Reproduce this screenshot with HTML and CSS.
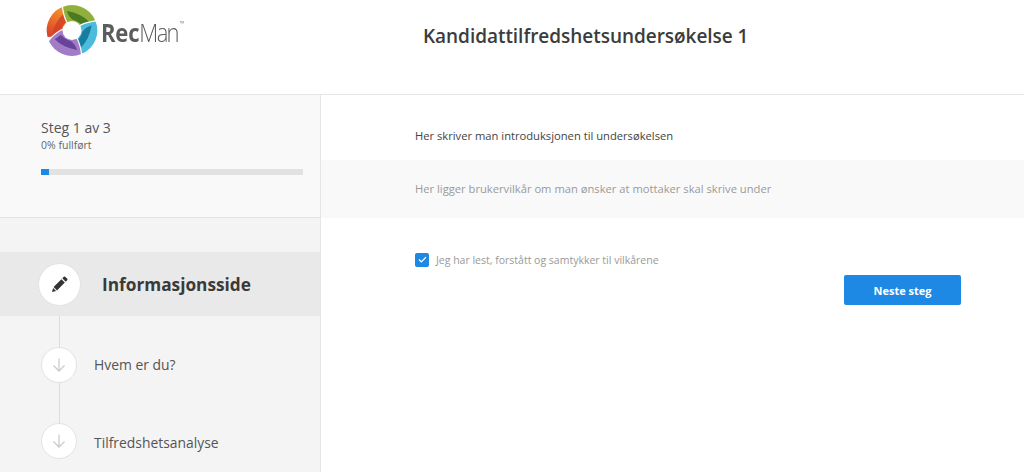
FILE: index.html
```html
<!DOCTYPE html>
<html lang="no">
<head>
<meta charset="utf-8">
<title>Kandidattilfredshetsundersøkelse 1</title>
<link rel="stylesheet" href="styles.css">
</head>
<body>
<header class="top">
  <div class="brand">
    <svg class="mark" viewBox="-26 -27.500 52 56" width="52" height="56" aria-hidden="true">
      <defs>
        <path id="blade" d="M-8-24.700A26 26 0 0 0-25 7Q-15 7-8 4Q-6-2 3-7Q0-17-8-24.700Z"/>
        <path id="streak" d="M-7-18Q-16-11-20 3Q-14 2-10.500-2Q-8-8-3-11.500Z"/>
        <linearGradient id="go" x1="0.8" y1="0" x2="0.2" y2="1"><stop offset="0" stop-color="#f2a22c"/><stop offset="0.6" stop-color="#ea6a28"/><stop offset="1" stop-color="#d8402e"/></linearGradient>
      </defs>
      <g>
        <use class="blade" href="#blade" fill="url(#go)"/>
        <use href="#streak" fill="#cf3f28" opacity="0.8"/>
      </g>
      <g transform="rotate(84)">
        <use class="blade" href="#blade" fill="#8fb03c"/>
        <use href="#streak" fill="#4a7a22"/>
      </g>
      <g transform="rotate(174)">
        <use class="blade" href="#blade" fill="#4dbbdc"/>
        <use href="#streak" fill="#177c9e"/>
      </g>
      <g transform="rotate(264)">
        <use class="blade" href="#blade" fill="#a27cc6"/>
        <use href="#streak" fill="#65449a"/>
      </g>
      <circle class="mark-hole" r="9.500"/>
    </svg>
    <span class="wordmark"><b>Rec</b>Man<sup>™</sup></span>
  </div>
  <h1 class="title">Kandidattilfredshetsundersøkelse 1</h1>
</header>
<div class="main">
  <aside class="side">
    <section class="progress">
      <div class="step-count">Steg 1 av 3</div>
      <div class="percent">0% fullført</div>
      <div class="bar"><div class="bar-fill"></div></div>
    </section>
    <nav class="steps">
      <div class="step step-active">
        <span class="dot dot-large">
          <svg viewBox="0 0 16 16" width="16" height="16" aria-hidden="true"><path d="M11.800.8a1 1 0 0 1 1.400 0l2 2a1 1 0 0 1 0 1.400L13.700 5.700 10.300 2.300zM9.400 3.200 12.800 6.600 5 14.400 1.600 11zM1.100 11.900 4.100 14.900 0 16z" fill="#333"/></svg>
        </span>
        <span class="step-name-active">Informasjonsside</span>
      </div>
      <div class="connector first"></div>
      <div class="step step-two">
        <span class="dot">
          <svg viewBox="0 0 14 16" width="14" height="16" aria-hidden="true"><path d="M7 1.500V14M1.500 8.500 7 14l5.500-5.500" fill="none" stroke="#ccc" stroke-width="1.300"/></svg>
        </span>
        <span class="step-name">Hvem er du?</span>
      </div>
      <div class="connector"></div>
      <div class="step step-three">
        <span class="dot">
          <svg viewBox="0 0 14 16" width="14" height="16" aria-hidden="true"><path d="M7 1.500V14M1.500 8.500 7 14l5.500-5.500" fill="none" stroke="#ccc" stroke-width="1.300"/></svg>
        </span>
        <span class="step-name">Tilfredshetsanalyse</span>
      </div>
    </nav>
  </aside>
  <main class="content">
    <p class="intro">Her skriver man introduksjonen til undersøkelsen</p>
    <div class="terms">Her ligger brukervilkår om man ønsker at mottaker skal skrive under</div>
    <label class="agree">
      <span class="check">
        <svg viewBox="0 0 10 8" width="9" height="7" aria-hidden="true"><path d="M1 4l2.700 2.700L9 1.300" fill="none" stroke="#fff" stroke-width="1.500"/></svg>
      </span>
      Jeg har lest, forstått og samtykker til vilkårene
    </label>
    <div class="actions"><button class="next" type="button">Neste steg</button></div>
  </main>
</div>
</body>
</html>
```
FILE: styles.css
```css
* { box-sizing: border-box; }
html, body { margin: 0; height: 100%; overflow: hidden; }
body { font-family: "Open Sans", sans-serif; color: #444; background: #fff; height: 472px; display: flex; flex-direction: column; }

.top { height: 95px; flex: none; display: flex; border-bottom: 1px solid #e6e6e6; background: #fff; }
.brand { width: 321px; flex: none; display: flex; align-items: flex-start; padding: 3px 0 0 46px; filter: blur(0.35px); }
.mark { flex: none; overflow: visible; }
.blade { stroke: #fff; stroke-width: 1.200px; }
.mark-hole { fill: #fff; }
.wordmark { font-family: "Open Sans", sans-serif; font-size: 25px; letter-spacing: -1.9px; color: #5a5c5e; margin: 13px 0 0 3px; line-height: 32px; font-weight: 300; transform: scaleX(0.88); transform-origin: left center; white-space: nowrap; }
.wordmark b { font-weight: 700; letter-spacing: -0.2px; }
.wordmark sup { font-size: 7px; letter-spacing: 0; vertical-align: 16px; line-height: 0; margin-left: 2px; }
.title { margin: 0; font-size: 19px; font-weight: 600; color: #3c3c3c; padding: 23px 0 0 102px; line-height: 27px; letter-spacing: -0.04px; }

.main { flex: 1; display: flex; min-height: 0; }
.side { width: 321px; flex: none; background: #f4f4f4; border-right: 1px solid #e6e6e6; overflow: hidden; }
.progress { height: 123px; background: #f9f9f9; border-bottom: 1px solid #e3e3e3; padding: 23px 17px 0 41px; }
.step-count { font-size: 14px; line-height: 19px; color: #555; }
.percent { font-size: 10.500px; line-height: 15px; margin-top: 1px; color: #666; }
.bar { height: 6px; margin-top: 16px; background: #e2e2e2; }
.bar-fill { width: 8px; height: 6px; background: #1e88e5; }

.steps { padding-top: 34px; }
.step { display: flex; align-items: center; padding-left: 41px; height: 36px; }
.step-active { background: #e9e9e9; height: 64px; padding-left: 38px; }
.step-two .step-name { margin-bottom: 2px; }
.step-three .step-name { margin-top: 2px; }
.dot { width: 36px; height: 36px; flex: none; border-radius: 50%; background: #fff; border: 1px solid #e2e2e2; display: flex; align-items: center; justify-content: center; }
.dot-large { width: 43px; height: 43px; }
.step-name { margin-left: 17px; font-size: 13.900px; color: #555; }
.step-name-active { margin-left: 21px; font-size: 17.250px; font-weight: 700; color: #3a3a3a; }
.connector { width: 1px; height: 40px; background: #dcdcdc; margin-left: 59px; }
.connector.first { height: 31px; }

.content { flex: 1; min-width: 0; background: #fff; }
.intro { margin: 0; height: 65px; padding: 33px 0 0 94px; font-size: 11.200px; line-height: 16px; color: #444; }
.terms { height: 58px; background: #f9f9f9; padding: 21px 0 0 94px; font-size: 11.200px; line-height: 16px; color: #999; }
.agree { display: flex; align-items: center; margin: 34px 0 0 94px; height: 15px; font-size: 10.500px; color: #999; }
.check { width: 14px; height: 14px; flex: none; margin-right: 7px; border-radius: 2px; background: #1e88e5; display: flex; align-items: center; justify-content: center; }
.actions { display: flex; justify-content: flex-end; padding: 8px 63px 0 0; }
.next { width: 117px; height: 30px; border: 0; border-radius: 2px; background: #1e88e5; color: #fff; font: 700 11px "Open Sans", sans-serif; }
```
